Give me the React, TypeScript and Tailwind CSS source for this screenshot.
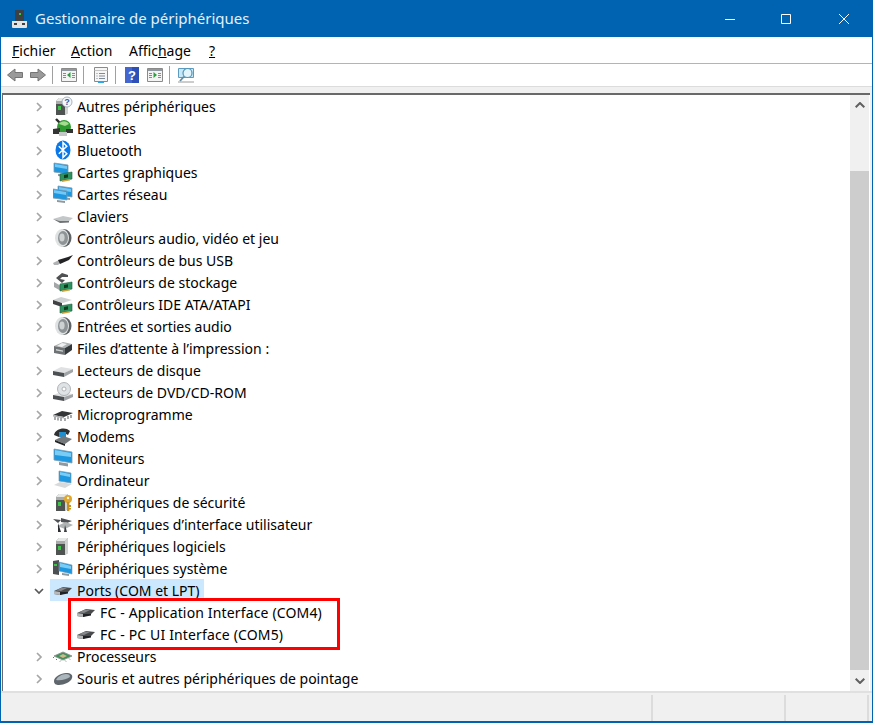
import type { ReactNode } from "react";

const Ic = ({ children, w = 20 }: { children: ReactNode; w?: number }) => (
  <svg width={w} height={20} viewBox="0 0 20 20" className="shrink-0">
    {children}
  </svg>
);

const Tower = () => (
  <>
    <path d="M3 5l3-3h9v15l-3 2H3z" fill="#8d8f8f" />
    <path d="M3 5h9v14H3z" fill="#4f5352" />
    <path d="M12 5l3-3v15l-3 2z" fill="#d0d2d2" />
    <path d="M3 5l3-3h9l-3 3z" fill="#e6e7e7" />
    <path d="M3 5h9v3H3z" fill="#a9abab" />
    <path d="M5 10h3v4H5z" fill="#3ec24a" />
  </>
);

const Monitor = ({ x = 0, y = 0 }: { x?: number; y?: number }) => (
  <g transform={`translate(${x} ${y})`}>
    <path d="M2 3l14 2v9L2 12z" fill="#1c97e0" stroke="#7d9cb0" strokeWidth="0.8" />
    <path d="M3 4l12 2v3L3 7z" fill="#74c8f4" />
    <path d="M6 14l8 1v2l-8-1z" fill="#8d9aa2" />
  </g>
);

const Card = () => (
  <>
    <path d="M7 12l12-2v7L7 19z" fill="#2e9160" stroke="#1f5f3c" strokeWidth="0.6" />
    <path d="M11 13l4-.7v3.2l-4 .7z" fill="#123a1d" />
    <path d="M9 18.4l8-1.4v1.6l-8 1.3z" fill="#d2a33a" />
  </>
);

const Speaker = () => (
  <>
    <ellipse cx="11" cy="10" rx="7.5" ry="9" fill="#5f6365" />
    <ellipse cx="9" cy="10" rx="7" ry="9" fill="#dfe2e3" />
    <ellipse cx="10" cy="10" rx="5" ry="7" fill="#8e9395" />
    <ellipse cx="9" cy="9.5" rx="2.6" ry="4" fill="#ced1d2" />
  </>
);

const Port = () => (
  <>
    <path d="M1 11l9-4 9 1-4 4-8 3-6-1z" fill="#4a4b4d" />
    <path d="M1 11l6 1v3l-6-1z" fill="#b5b7b8" />
    <path d="M7 12l8 0v1.5L7 15z" fill="#202124" />
    <path d="M3 10.5l6-3 5 .6-6 3z" fill="#85878a" />
  </>
);

const icons: Record<string, ReactNode> = {
  unknown: (
    <Ic>
      <Tower />
      <circle cx="14" cy="6" r="5" fill="#f4f6f8" stroke="#8fa3b2" strokeWidth="0.8" />
      <text x="14" y="9.3" fontSize="9" fontWeight="700" textAnchor="middle" fill="#2b5fa8" fontFamily="Liberation Sans, sans-serif">?</text>
    </Ic>
  ),
  battery: (
    <Ic>
      <path d="M3 1l5 5" stroke="#2c2c2c" strokeWidth="2.4" />
      <circle cx="11" cy="9" r="7" fill="#2f9a2f" />
      <path d="M6 6a6 6 0 0 1 10 0l-4 2z" fill="#a5dc8f" />
      <path d="M0 11l7-1v6l-7 0z" fill="#343434" />
      <path d="M13 11h7v4h-7z" fill="#343434" />
      <path d="M6 14h8v4H6z" fill="#c4c7c8" />
    </Ic>
  ),
  bluetooth: (
    <Ic>
      <ellipse cx="10" cy="10" rx="7.5" ry="9.5" fill="#0a78e8" />
      <path d="M5.8 6.2l8 7.6L10 17.5v-15l3.8 3.7-8 7.6" fill="none" stroke="#fff" strokeWidth="1.5" />
    </Ic>
  ),
  graphics: (
    <Ic>
      <Monitor x={-1} y={-2} />
      <Card />
    </Ic>
  ),
  network: (
    <Ic>
      <Monitor x={3} y={-1} />
      <Monitor x={-2} y={2} />
    </Ic>
  ),
  keyboard: (
    <Ic>
      <path d="M0 13l10-3 10 2-4 3-9 0z" fill="#c4c7c8" />
      <path d="M0 13l7 2 9 0v1.5l-9 .5z" fill="#6f7274" />
    </Ic>
  ),
  audio: (
    <Ic>
      <Speaker />
    </Ic>
  ),
  usb: (
    <Ic>
      <path d="M0 13l6-3 4 1-5 4-4 0z" fill="#b0b2b3" />
      <path d="M5 10l10-3 5-2-4 5-9 4z" fill="#232325" />
    </Ic>
  ),
  storage: (
    <Ic>
      <path d="M3 6l6-5 6 2v2H9L7 7l5 1-3 3z" fill="#4f5152" />
      <path d="M1 10l7 4v5l-7-4z" fill="#a4a6a7" />
      <Card />
    </Ic>
  ),
  ide: (
    <Ic>
      <path d="M0 6l8-3 11 3-9 3z" fill="#cfd2d3" />
      <path d="M0 6l9 3v4L0 10z" fill="#3f4142" />
      <Card />
    </Ic>
  ),
  printer: (
    <Ic>
      <path d="M1 8l9-4 9 2-7 4z" fill="#aeb1b3" />
      <path d="M1 8l11 2v7L1 15z" fill="#6f7274" />
      <path d="M12 10l7-4v6l-7 5z" fill="#35383a" />
      <path d="M4 8l5-3 5 1-5 3z" fill="#eef0f1" />
      <path d="M3 11l7 1.4v1.4L3 12.4z" fill="#cfd2d3" />
    </Ic>
  ),
  disk: (
    <Ic>
      <path d="M0 11l8-4 12 2-9 4z" fill="#dfe1e2" />
      <path d="M0 11l11 2v4L0 15z" fill="#4d5052" />
      <path d="M11 13l9-4v3l-9 5z" fill="#a2a5a7" />
    </Ic>
  ),
  dvd: (
    <Ic>
      <path d="M0 13l8-3 12 2-9 3z" fill="#dfe1e2" />
      <path d="M0 13l11 2v4L0 17z" fill="#4d5052" />
      <path d="M11 15l9-3v3l-9 4z" fill="#a2a5a7" />
      <circle cx="11" cy="7" r="6.5" fill="#e0e3e5" stroke="#a0a5a8" strokeWidth="0.8" />
      <circle cx="11" cy="7" r="2" fill="#fff" stroke="#a0a5a8" strokeWidth="0.8" />
    </Ic>
  ),
  firmware: (
    <Ic>
      <path d="M0 11l9-4 11 2-9 4z" fill="#333536" />
      <path d="M0 11l11 2v1.5L0 12.5z" fill="#a9abac" />
      <path d="M2 13v3M5 13.5v3M8 14v3M12 14v3M15 12v3M18 11v3" stroke="#6f7274" strokeWidth="1.2" />
    </Ic>
  ),
  modem: (
    <Ic>
      <path d="M1 9C2 3 12 0 17 5l-2 4c-3-2-7-2-9 2z" fill="#2f3133" />
      <path d="M6 6h7v5H6z" fill="#1e8fd0" />
      <path d="M2 14l8-4 9 3-7 5z" fill="#75787a" />
      <path d="M2 14l10 4v2L2 16z" fill="#222426" />
    </Ic>
  ),
  monitor: (
    <Ic>
      <path d="M1 1l18 3v11L1 12z" fill="#1c97e0" stroke="#7d9cb0" strokeWidth="0.8" />
      <path d="M2 2l16 3v4L2 7z" fill="#7accf5" />
      <path d="M6 14l9 1.4v3L6 17z" fill="#8d9aa2" />
    </Ic>
  ),
  computer: (
    <Ic>
      <path d="M6 1l12 2v10L6 11z" fill="#1c97e0" stroke="#7d9cb0" strokeWidth="0.7" />
      <path d="M7 2l10 2v3L7 5z" fill="#7accf5" />
      <path d="M1 15l6-3 12 2-7 4z" fill="#d7d9da" />
    </Ic>
  ),
  security: (
    <Ic>
      <Tower />
      <circle cx="15" cy="7" r="4" fill="#e0a72e" />
      <circle cx="15" cy="6" r="1.2" fill="#fff5d6" />
      <path d="M14 10h2.4v9H14zM16 13h2v2h-2zM16 16h2v1.6h-2z" fill="#c98f1c" />
    </Ic>
  ),
  hid: (
    <Ic>
      <path d="M0 5l8 1-3 3zM8 4l11 3-5 2-6-1z" fill="#4d5052" />
      <path d="M4 12l9-4 7 3-8 4z" fill="#b0b3b4" />
      <path d="M5 9l3 9H5z" fill="#2a2d2f" />
      <path d="M12 11l2 7h-3z" fill="#3c3f42" />
    </Ic>
  ),
  software: (
    <Ic>
      <Tower />
    </Ic>
  ),
  system: (
    <Ic>
      <path d="M0 3l6-1v15l-6-1z" fill="#4d5052" />
      <path d="M1 6h3v2H1z" fill="#3ec24a" />
      <path d="M6 4l13 3v9L6 13z" fill="#1c97e0" stroke="#7d9cb0" strokeWidth="0.6" />
      <path d="M7 5l11 3v3L7 9z" fill="#7accf5" />
      <path d="M9 15l7 1v2l-7-1z" fill="#8d9aa2" />
    </Ic>
  ),
  port: (
    <Ic>
      <Port />
    </Ic>
  ),
  cpu: (
    <Ic>
      <path d="M1 10l9-4 9 4-9 4z" fill="#3f8f5a" stroke="#8f958f" strokeWidth="0.9" />
      <path d="M6 10l4-2 4 2-4 2z" fill="#cdb98a" />
      <path d="M1 11l-1 1M4 13l-1 1M8 14.500l-1 1M12 14.500l1 1M16 12.500l1 1" stroke="#6f7274" />
    </Ic>
  ),
  mouse: (
    <Ic>
      <path d="M1 13c0-4 7-8 12-8 5 0 7 2 6 5-1 4-8 7-13 7-3 0-5-1-5-4z" fill="#5f676d" />
      <path d="M3 12c1-3 6-6 10-6 3 0 4 1 4 3-3 2-9 4-14 3z" fill="#aab5bc" />
    </Ic>
  ),
};

const rows: [string, string][] = [
  ["Autres périphériques", "unknown"],
  ["Batteries", "battery"],
  ["Bluetooth", "bluetooth"],
  ["Cartes graphiques", "graphics"],
  ["Cartes réseau", "network"],
  ["Claviers", "keyboard"],
  ["Contrôleurs audio, vidéo et jeu", "audio"],
  ["Contrôleurs de bus USB", "usb"],
  ["Contrôleurs de stockage", "storage"],
  ["Contrôleurs IDE ATA/ATAPI", "ide"],
  ["Entrées et sorties audio", "audio"],
  ["Files d’attente à l’impression :", "printer"],
  ["Lecteurs de disque", "disk"],
  ["Lecteurs de DVD/CD-ROM", "dvd"],
  ["Microprogramme", "firmware"],
  ["Modems", "modem"],
  ["Moniteurs", "monitor"],
  ["Ordinateur", "computer"],
  ["Périphériques de sécurité", "security"],
  ["Périphériques d’interface utilisateur", "hid"],
  ["Périphériques logiciels", "software"],
  ["Périphériques système", "system"],
];

function Chevron({ open = false }: { open?: boolean }) {
  return (
    <svg width="10" height="10" viewBox="0 0 10 10" className="shrink-0 mt-[2px]">
      {open ? (
        <path d="M1 3l4 4 4-4" fill="none" stroke="#595959" strokeWidth="1.7" />
      ) : (
        <path d="M3 1l4 4-4 4" fill="none" stroke="#a6a6a6" strokeWidth="1.7" />
      )}
    </svg>
  );
}

function Row({ label, icon, open }: { label: string; icon: string; open?: boolean }) {
  return (
    <div className="h-[22px] flex items-center pl-[31px]">
      <Chevron open={open} />
      <div className={`h-[22px] flex items-center ml-[6px] pl-[3px] pr-[4px] gap-[4px] ${open ? "bg-[#cce8ff]" : ""}`}>
        {icons[icon]}
        <span className="whitespace-nowrap">{label}</span>
      </div>
    </div>
  );
}

function Child({ label }: { label: string }) {
  return (
    <div className="h-[22px] flex items-center pl-[73px] gap-[4px]">
      {icons.port}
      <span className="whitespace-nowrap tracking-[0.15px]">{label}</span>
    </div>
  );
}

function Tool({ children }: { children: ReactNode }) {
  return (
    <svg width="16" height="16" viewBox="0 0 16 16" className="shrink-0">
      {children}
    </svg>
  );
}

const Sep = () => <div className="w-px h-[18px] bg-[#a0a0a0]" />;

const Pane = ({ arrow }: { arrow?: ReactNode }) => (
  <Tool>
    <path d="M.5 1.5h15v13H.5z" fill="#f4f4f4" stroke="#8a8a8a" />
    <path d="M1 2h14v2H1z" fill="#8f9aa0" />
    <path d="M2 6h3v1H2zM2 8h3v1H2zM2 10h3v1H2zM11 6h3v1h-3zM11 8h3v1h-3zM11 10h3v1h-3z" fill="#8a8a8a" />
    {arrow}
  </Tool>
);

function Toolbar() {
  return (
    <div className="h-[22px] bg-white flex items-center pl-[6px] shrink-0">
      <Tool>
        <path d="M.5 8L8 2v3.500h7.500v5H8V14z" fill="#9a9a9a" stroke="#757575" />
      </Tool>
      <div className="ml-[7px]">
        <Tool>
          <path d="M15.500 8L8 2v3.500H.5v5H8V14z" fill="#9a9a9a" stroke="#757575" />
        </Tool>
      </div>
      <div className="ml-[6px] mr-[8px]"><Sep /></div>
      <Pane arrow={<path d="M9.500 5v6L6 8z" fill="#2f9e44" />} />
      <div className="ml-[6px] mr-[9px]"><Sep /></div>
      <Tool>
        <path d="M1.500.5h13v14h-13z" fill="#f6f6f6" stroke="#8a8a8a" />
        <path d="M1.500 3.500h13" stroke="#c4c4c4" />
        <path d="M6 6.500h6M6 9h6M6 11.500h6M3.500 6.500h1M3.500 9h1M3.500 11.500h1" stroke="#7e8a94" />
        <path d="M5 14.500h6V16H5z" fill="#2ea6e8" />
      </Tool>
      <div className="ml-[6px] mr-[9px]"><Sep /></div>
      <svg width="14" height="16" viewBox="0 0 14 16" className="shrink-0">
        <path d="M0 0h14v16H0z" fill="#2f4fb8" />
        <path d="M0 0h7v16H0z" fill="#4666cf" />
        <text x="7" y="13" fontSize="13" fontWeight="700" textAnchor="middle" fill="#fff" fontFamily="Liberation Sans, sans-serif">?</text>
      </svg>
      <div className="ml-[8px]">
        <Pane arrow={<path d="M6.500 5v6l3.500-3z" fill="#2f9e44" />} />
      </div>
      <div className="ml-[6px] mr-[8px]"><Sep /></div>
      <Tool>
        <path d="M.5 1.500h15v9H.5z" fill="#c8e8f8" stroke="#5d9cc0" />
        <circle cx="9.500" cy="6" r="4.500" fill="#e4f4fc" stroke="#4f94b8" strokeWidth="1.2" />
        <path d="M6 9.500l-4 4.500" stroke="#5f8aa0" strokeWidth="1.8" />
        <path d="M0 15h16" stroke="#9a9a9a" />
      </Tool>
    </div>
  );
}

export default function App() {
  return (
    <div className="relative w-[873px] h-[723px] flex flex-col bg-[#f0f0f0] border-x border-b-2 border-[#0063b1] text-[#000] text-[14px] font-['Noto_Sans','Open_Sans',sans-serif]">
      <div className="h-[37px] -mx-px bg-[#0063b1] flex items-center pl-[11px] text-white shrink-0">
        <svg width="17" height="20" viewBox="0 0 17 20" className="shrink-0">
          <path d="M4 1h9v11H4z" fill="#3d4143" />
          <path d="M8 4h2v2H8z" fill="#3ec24a" />
          <path d="M1 12h15v6a1 1 0 0 1-1 1H2a1 1 0 0 1-1-1z" fill="#e4e4e4" />
          <path d="M3 14h3v2H3zM11 14h3v2h-3z" fill="#3d4143" />
        </svg>
        <span className="ml-[7px] text-[15px] text-[#e6f0f8] whitespace-nowrap">Gestionnaire de périphériques</span>
        <div className="ml-auto flex items-center pr-[24px]">
          <svg width="10" height="10" viewBox="0 0 10 10"><path d="M0 5.500h10" stroke="#fff" /></svg>
          <svg width="10" height="10" viewBox="0 0 10 10" className="ml-[46px]"><path d="M.5.5h9v9h-9z" fill="none" stroke="#fff" /></svg>
          <svg width="10" height="10" viewBox="0 0 10 10" className="ml-[48px]"><path d="M0 0l10 10M10 0L0 10" stroke="#fff" /></svg>
        </div>
      </div>

      <div className="h-[27px] bg-white border-b border-[#b4b4b4] flex items-center pl-[11px] shrink-0">
        <span className="w-[59px]"><u>F</u>ichier</span>
        <span className="w-[58px]"><u>A</u>ction</span>
        <span className="w-[80px]">Affic<u>h</u>age</span>
        <span><u>?</u></span>
      </div>

      <Toolbar />

      <div className="h-[7px] border-t border-[#dcdcdc] shrink-0" />

      <div className="h-[598px] ml-[1px] mr-[2px] border-l border-t-2 border-[#696969] bg-white flex shrink-0">
        <div className="flex-1 min-w-0">
          {rows.map(([label, icon]) => (
            <Row key={label} label={label} icon={icon} />
          ))}
          <Row label="Ports (COM et LPT)" icon="port" open />
          <Child label="FC - Application Interface (COM4)" />
          <Child label="FC - PC UI Interface (COM5)" />
          <Row label="Processeurs" icon="cpu" />
          <Row label="Souris et autres périphériques de pointage" icon="mouse" />
        </div>
        <div className="w-[19px] bg-[#f0f0f0] flex flex-col shrink-0 mr-px">
          <div className="h-[19px] flex items-center justify-center">
            <svg width="10" height="6" viewBox="0 0 10 6"><path d="M.7 5.300L5 1l4.300 4.300" fill="none" stroke="#606060" strokeWidth="2" /></svg>
          </div>
          <div className="h-[57px]" />
          <div className="h-[499px] bg-[#cdcdcd]" />
          <div className="h-[21px] flex items-center justify-center">
            <svg width="10" height="6" viewBox="0 0 10 6"><path d="M.7.7L5 5 9.300.7" fill="none" stroke="#606060" strokeWidth="2" /></svg>
          </div>
        </div>
      </div>

      <div className="flex-1 border-t-2 border-[#e0e0e0] pt-[2px] flex justify-end pr-[3px]">
        <div className="w-[133px] border-l-2 border-[#dcdcdc]" />
        <div className="w-[85px] border-x-2 border-[#dcdcdc]" />
      </div>

      <div className="absolute left-[67px] top-[598px] w-[272px] h-[52px] border-[3px] border-[#ff0000]" />
    </div>
  );
}
